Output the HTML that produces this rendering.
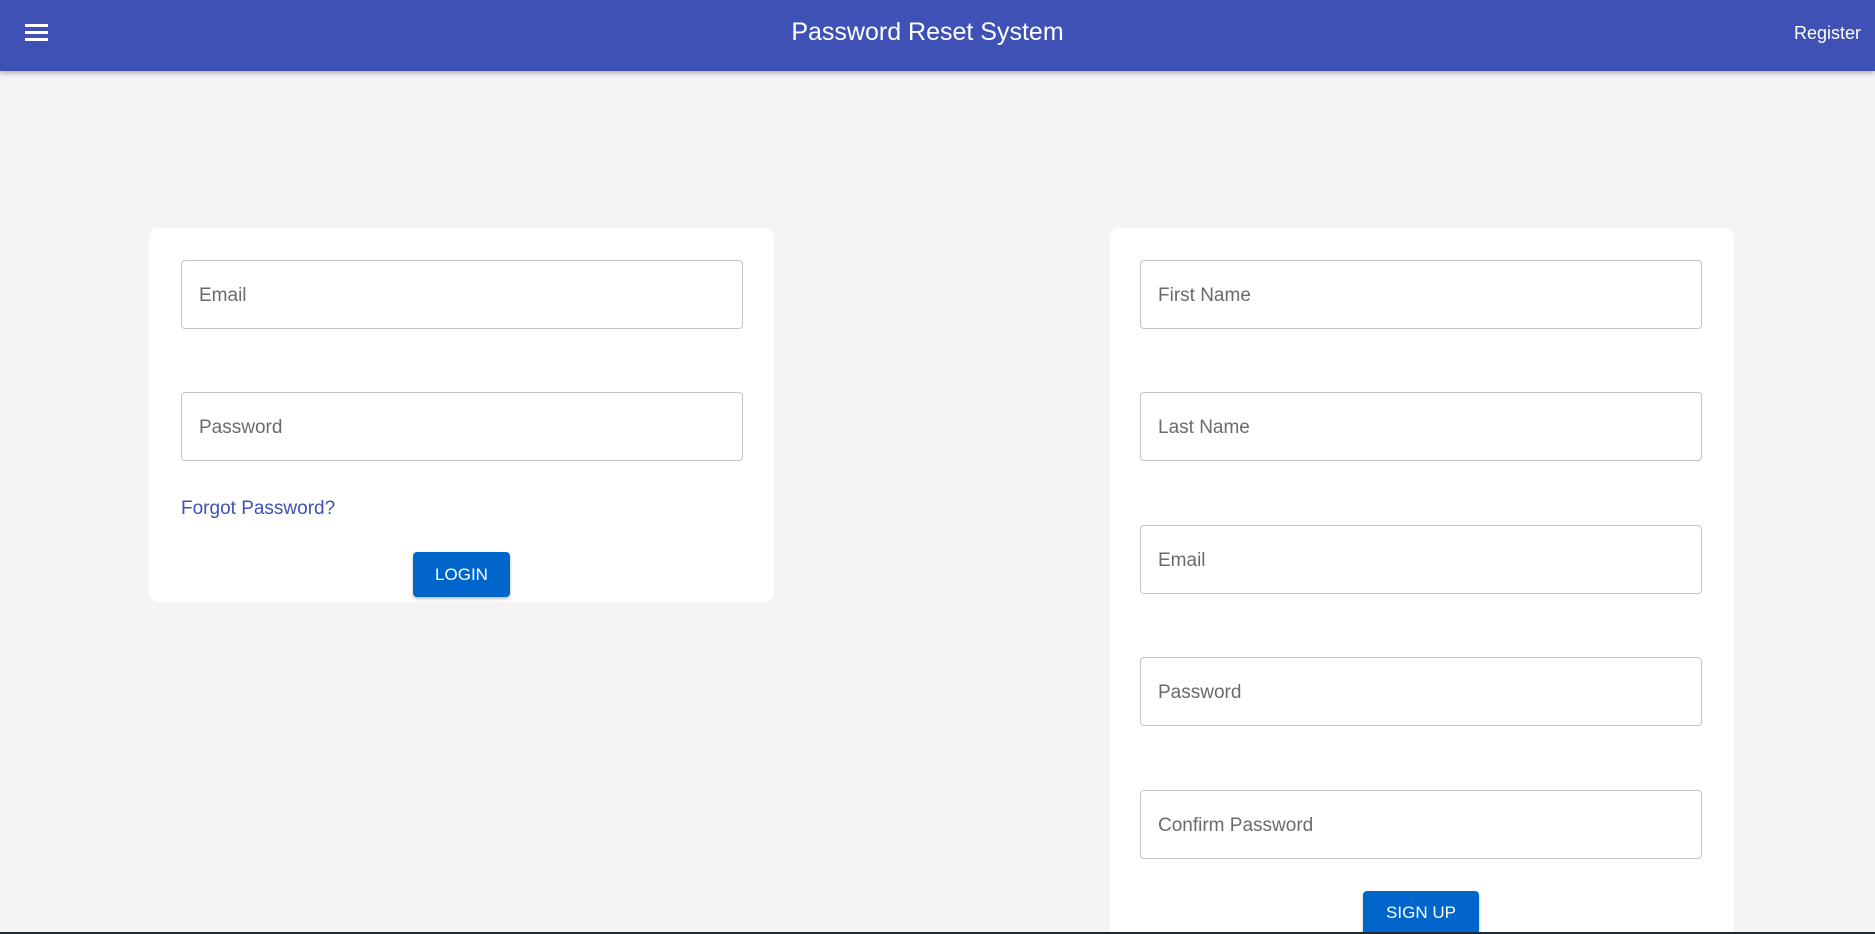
<!DOCTYPE html>
<html><head><meta charset="utf-8"><style>
*{box-sizing:border-box;margin:0;padding:0}
html,body{width:1875px;height:934px;overflow:hidden;background:#f4f4f4;font-family:"Liberation Sans",Arial,sans-serif;position:relative}
.hdr{position:absolute;left:0;top:0;width:1875px;height:71px;background:#3f51b5;box-shadow:0 2px 5px rgba(0,0,0,.3)}
.ham{position:absolute;left:25px;top:24px;width:23px}
.ham i{display:block;height:2.5px;background:#fff;margin-bottom:4.5px}
.title{position:absolute;left:-10px;width:1875px;top:18px;text-align:center;color:#fff;font-size:25px}
.reg{position:absolute;right:14px;top:23px;color:#fff;font-size:18px}
.card{position:absolute;background:#fff;border-radius:10px}
.inp{position:absolute;height:69px;border:1px solid #c4c4c4;border-radius:4px;color:#6b6b6b;font-size:19px;padding-left:17px;line-height:69px;width:562px}
.btn{position:absolute;background:#0066cc;color:#fff;border-radius:4px;font-size:17px;text-align:center;box-shadow:0 2px 3px rgba(0,0,0,.25)}
.fp{position:absolute;color:#3f51b5;font-size:19px}
.bot{position:absolute;left:0;top:932px;width:1875px;height:2px;background:#1f2a33}
</style></head><body>
<div class="hdr">
<div class="ham"><i></i><i></i><i></i></div>
<div class="title">Password Reset System</div>
<div class="reg">Register</div>
</div>
<div class="card" style="left:149px;top:228px;width:625px;height:374px"></div>
<div class="inp" style="left:181px;top:260px">Email</div>
<div class="inp" style="left:181px;top:392px">Password</div>
<div class="fp" style="left:181px;top:498px">Forgot Password?</div>
<div class="btn" style="left:413px;top:552px;width:97px;height:45px;line-height:45px">LOGIN</div>

<div class="card" style="left:1110px;top:228px;width:624px;height:720px"></div>
<div class="inp" style="left:1140px;top:260px">First Name</div>
<div class="inp" style="left:1140px;top:392px">Last Name</div>
<div class="inp" style="left:1140px;top:525px">Email</div>
<div class="inp" style="left:1140px;top:657px">Password</div>
<div class="inp" style="left:1140px;top:790px">Confirm Password</div>
<div class="btn" style="left:1363px;top:891px;width:116px;height:50px;line-height:44px;border-radius:4px 4px 0 0">SIGN UP</div>
<div class="bot"></div>
</body></html>
